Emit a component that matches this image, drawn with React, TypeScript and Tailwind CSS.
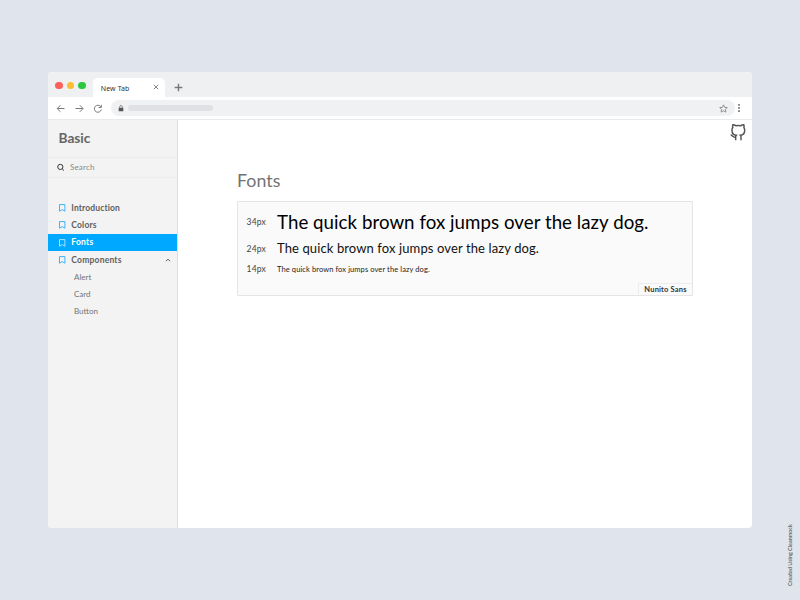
import React from "react";

function Bookmark({ active }: { active?: boolean }) {
  return (
    <svg className={`h-[8px] w-[7px] shrink-0 ${active ? "text-[#bfe9ff]" : "text-[#25adf7]"}`} viewBox="0 0 7 8" fill="none" stroke="currentColor" strokeWidth="0.9">
      <path d="M.5.6h5.4v6.6L3.2 5.6.5 7.2z" />
    </svg>
  );
}

function Item({ label, active, track, children }: { label: string; active?: boolean; track: string; children?: React.ReactNode }) {
  return (
    <div className={`flex h-[17.4px] items-center pl-[10.5px] pr-[6px] font-bold ${active ? "bg-[#00a8ff] text-white" : "text-[#606060]"}`}>
      <Bookmark active={active} />
      <span className={`ml-[5.8px] text-[8.5px] ${track}`}>{label}</span>
      {children}
    </div>
  );
}

function Row({ size, children }: { size: string; children: React.ReactNode }) {
  return (
    <>
      <span className="w-[30.5px] shrink-0 text-[8.5px] tracking-[0.2px] text-[#444]">{size}</span>
      {children}
    </>
  );
}

export default function App() {
  return (
    <div className="relative h-[600px] w-[800px] overflow-hidden bg-[#dfe4ed] pl-[48px] pt-[72px] font-['Lato',sans-serif]">
      <div className="flex h-[456px] w-[704px] flex-col overflow-hidden rounded-[4px] bg-white">
        <div className="flex h-[25px] shrink-0 bg-[#eff0f2] pl-[7px]">
          <div className="mt-[9.5px] flex gap-[4px]">
            <i className="h-[7.6px] w-[7.6px] rounded-full bg-[#fc605b]" />
            <i className="h-[7.6px] w-[7.6px] rounded-full bg-[#fdbc31]" />
            <i className="h-[7.6px] w-[7.6px] rounded-full bg-[#2bc840]" />
          </div>
          <div className="ml-[7px] mt-[5.5px] flex h-[19.5px] w-[72px] items-center rounded-t-[5px] bg-white pl-[8px] pr-[6px]">
            <span className="mt-[3.5px] font-['Noto_Sans',sans-serif] text-[7px] tracking-[0.1px] text-[#333]">New Tab</span>
            <svg className="ml-auto h-[6px] w-[6px]" viewBox="0 0 6 6" stroke="#777" strokeWidth="0.9"><path d="M.8.8l4.4 4.4M5.2.8.8 5.2" /></svg>
          </div>
          <svg className="ml-[9px] mt-[11px] h-[9px] w-[9px]" viewBox="0 0 9 9" stroke="#777" strokeWidth="1.4"><path d="M4.5.7v7.6M.7 4.5h7.6" /></svg>
        </div>
        <div className="flex h-[22px] shrink-0 items-center pl-[8px] pr-[9px]">
          <svg className="h-[9px] w-[47px]" viewBox="0 0 47 9" fill="none" stroke="#777" strokeWidth="1">
            <path d="M8.5 4.5h-7M4.5 1.2 1.2 4.5l3.3 3.3M19.5 4.5h7.3M23.8 1.2l3.3 3.3-3.3 3.3M44.8 2.8A3.5 3.5 0 1 0 45.3 5.5M45.3.8v2.7h-2.7" />
          </svg>
          <div className="ml-[8px] flex h-[16px] w-[624px] items-center rounded-full bg-[#f0f1f3] pl-[7px] pr-[7px]">
            <svg className="h-[7px] w-[6px]" viewBox="0 0 6 7"><path d="M.7 2.8h4.6v3.5H.7z" fill="#555" /><path d="M1.7 3V1.8a1.3 1.3 0 0 1 2.6 0V3" fill="none" stroke="#777" strokeWidth=".8" /></svg>
            <div className="ml-[3.5px] h-[6px] w-[85px] rounded-full bg-[#dfe1e4]" />
            <svg className="ml-auto h-[9px] w-[9px]" viewBox="0 0 9 9" fill="none" stroke="#888" strokeWidth=".9"><path d="m4.5.9 1.1 2.4 2.7.3-2 1.8.6 2.7-2.4-1.4-2.4 1.4.6-2.7-2-1.8 2.7-.3z" /></svg>
          </div>
          <svg className="ml-[3px] h-[8px] w-[2px]" viewBox="0 0 2 8" fill="#888"><path d="M0 0h2v1.7H0zM0 3.1h2v1.7H0zM0 6.3h2V8H0z" /></svg>
        </div>
        <div className="h-[1px] shrink-0 bg-[#e9eaeb]" />
        <div className="flex min-h-0 flex-1">
          <aside className="w-[130px] shrink-0 border-r border-[#dedede] bg-[#f3f3f3]">
            <div className="flex h-[38px] items-center border-b border-[#ececec] pl-[10.5px] text-[13.7px] font-bold tracking-[0px] text-[#666]">Basic</div>
            <div className="flex h-[20px] items-center border-b border-[#ececec] pb-[1px] pl-[9px]">
              <svg className="h-[8px] w-[8px]" viewBox="0 0 8 8" fill="none" stroke="#222" strokeWidth=".9"><circle cx="3.3" cy="3.9" r="2.6" /><path d="m5.2 5.8 1.8 1.8" /></svg>
              <span className="ml-[5px] text-[8px] tracking-[0.16px] text-[#888]">Search</span>
            </div>
            <nav className="pt-[21.3px]">
              <Item label="Introduction" track="tracking-[0.14px]" />
              <Item label="Colors" track="tracking-[0.2px]" />
              <Item label="Fonts" active track="tracking-[0.25px]" />
              <Item label="Components" track="tracking-[0.22px]">
                <svg className="ml-auto h-[4px] w-[6px]" viewBox="0 0 6 4" fill="none" stroke="#666"><path d="M.8 3.2 3 1.2l2.2 2" /></svg>
              </Item>
              <div className="-mt-[0.800px] pl-[26px] text-[8px] text-[#737373]">
                <div className="flex h-[17.2px] items-center">Alert</div>
                <div className="flex h-[17.2px] items-center">Card</div>
                <div className="flex h-[17.2px] items-center">Button</div>
              </div>
            </nav>
          </aside>
          <main className="flex-1">
            <div className="flex h-[48px] justify-end pr-[6px] pt-[3.5px]">
              <svg className="h-[17px] w-[16px]" viewBox="0 0 24 24" preserveAspectRatio="none" fill="none" stroke="#555" strokeWidth="2.2">
                <path d="M9 18.5C4 20 4 15.500 1 15.500M16.500 23v-4.500a3.500 3.500 0 0 0-1-2.600c3.300-.4 6.500-1.700 6.500-6.900A6 6 0 0 0 20.800 5 5.200 5.200 0 0 0 20.700 1.200S19 .8 16.200 2.500a14 14 0 0 0-7.400 0C6 .8 4.300 1.200 4.300 1.200A5.200 5.200 0 0 0 4.200 5 6 6 0 0 0 3 9c0 5.200 3.200 6.500 6.500 6.900a3.500 3.500 0 0 0-1 2.600V23" />
              </svg>
            </div>
            <div className="ml-[59px] flex h-[33px] items-start text-[17.8px] leading-[24px] tracking-[0.05px] text-[#727272]">Fonts</div>
            <div className="ml-[59px] flex h-[95px] w-[456px] flex-col rounded-[1px] border border-[#e5e5e5] bg-[#fafafa]">
              <div className="ml-[8.5px] mt-[7px] flex h-[26px] items-center whitespace-nowrap"><Row size="34px"><span className="text-[18.7px] tracking-[0.04px] text-black">The quick brown fox jumps over the lazy dog.</span></Row></div>
              <div className="ml-[8.5px] flex h-[28px] items-center whitespace-nowrap"><Row size="24px"><span className="text-[13px] tracking-[0.11px] text-[#111]">The quick brown fox jumps over the lazy dog.</span></Row></div>
              <div className="ml-[8.5px] flex h-[13px] items-center whitespace-nowrap"><Row size="14px"><span className="text-[7.5px] tracking-[0.1px] text-[#222]">The quick brown fox jumps over the lazy dog.</span></Row></div>
              <div className="ml-auto mt-auto flex h-[12px] w-[54px] items-center justify-center whitespace-nowrap border-l border-t border-[#ededed] text-[7.5px] font-bold tracking-[0.18px] text-[#333]">Nunito Sans</div>
            </div>
          </main>
        </div>
      </div>
      <span className="absolute left-[786px] top-[524px] h-[62px] w-[8px] rotate-180 whitespace-nowrap text-[5.4px] font-bold leading-[8px] text-[#6b6d70] [writing-mode:vertical-rl]">Created Using Cleanmock</span>
    </div>
  );
}
